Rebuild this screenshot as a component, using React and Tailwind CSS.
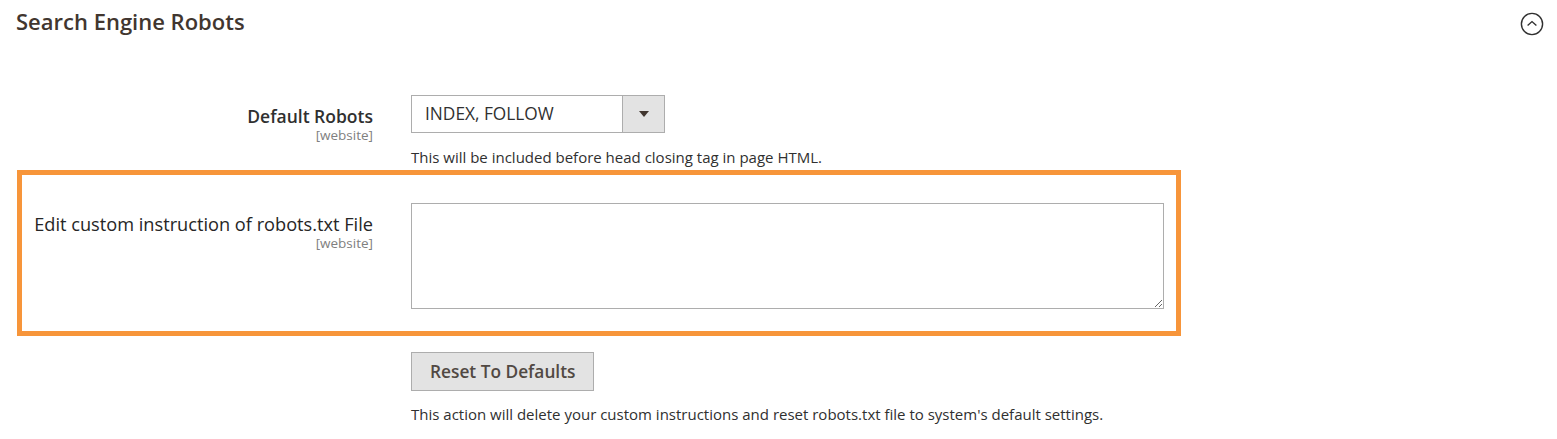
export default function App() {
  return (
    <div className="w-[1557px] h-[439px] bg-white overflow-hidden font-['Open_Sans',sans-serif] text-[#303030] relative">
      {/* section header */}
      <div className="flex items-center justify-between pl-[16px] pr-[13px] pt-[6px]">
        <h2 className="text-[22px] leading-[30px] font-semibold text-[#41362f]">Search Engine Robots</h2>
        <svg width="24" height="24" viewBox="0 0 24 24" className="mt-[6px]">
          <circle cx="12" cy="12" r="10.6" fill="none" stroke="#303030" strokeWidth="1.4" />
          <path d="M7.6 13.6 L12 9.6 L16.4 13.6" fill="none" stroke="#303030" strokeWidth="1.4" />
        </svg>
      </div>

      <div className="px-[17px] pt-[59px]">
        {/* Default Robots */}
        <div className="flex">
          <div className="w-[356px] text-right pt-[9px]">
            <div className="text-[17.5px] leading-[24px] font-semibold">Default Robots</div>
            <div className="text-[13.5px] leading-[15px] text-[#808080]">[website]</div>
          </div>
          <div className="ml-[38px]">
            <div className="flex w-[254px] h-[38px] border border-[#adadad] bg-white">
              <div className="flex-1 pl-[13px] text-[17.3px] leading-[36px]">INDEX, FOLLOW</div>
              <div className="w-[42px] border-l border-[#adadad] bg-[#e3e3e3] flex items-center justify-center">
                <svg width="10" height="6" viewBox="0 0 10 6">
                  <path d="M0 0 H10 L5 6 Z" fill="#41362f" />
                </svg>
              </div>
            </div>
            <p className="mt-[14px] text-[15px] leading-[20px]">This will be included before head closing tag in page HTML.</p>
          </div>
        </div>

        {/* custom instructions, highlighted */}
        <div className="mt-[3px] w-[1164px] border-[5px] border-[#f7953a] flex pt-[28px] pb-[22px]">
          <div className="w-[351px] text-right pt-[9px]">
            <div className="text-[18.2px] leading-[24px] text-[#262626]">Edit custom instruction of robots.txt File</div>
            <div className="text-[13.5px] leading-[15px] text-[#808080]">[website]</div>
          </div>
          <div className="ml-[38px]">
            <textarea className="block w-[753px] h-[106px] border border-[#adadad] bg-white outline-none resize-y"></textarea>
          </div>
        </div>

        {/* reset */}
        <div className="pl-[394px] mt-[16px]">
          <button className="h-[39px] px-[18px] border border-[#adadad] bg-[#e3e3e3] text-[#514943] text-[17.3px] font-semibold">
            Reset To Defaults
          </button>
          <p className="mt-[13px] text-[15px] leading-[20px]">
            This action will delete your custom instructions and reset robots.txt file to system's default settings.
          </p>
        </div>
      </div>
    </div>
  );
}
